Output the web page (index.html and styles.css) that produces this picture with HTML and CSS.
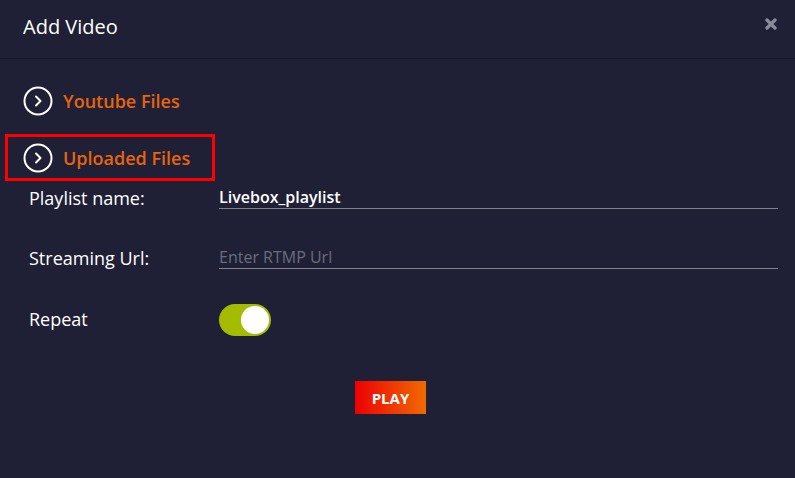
FILE: index.html
```html
<!DOCTYPE html>
<html>
<head>
<meta charset="utf-8">
<link rel="stylesheet" href="styles.css">
</head>
<body>
<div class="modal">
  <div class="header">
    <h1 class="title">Add Video</h1>
    <span class="close"><svg width="12" height="12" viewBox="0 0 12 12"><path d="M2 2 L10 10 M10 2 L2 10" stroke="#8a8b98" stroke-width="3.4" stroke-linecap="round"/></svg></span>
  </div>
  <div class="body">
    <div class="section">
      <span class="chev"><svg width="30" height="30" viewBox="0 0 30 30"><circle cx="15" cy="15" r="13.5" fill="none" stroke="#fff" stroke-width="2"/><path d="M13 10.5 L17.5 15 L13 19.5" fill="none" stroke="#fff" stroke-width="2" stroke-linecap="round" stroke-linejoin="round"/></svg></span>
      <span class="section-title">Youtube Files</span>
    </div>
    <div class="section highlighted">
      <span class="chev"><svg width="30" height="30" viewBox="0 0 30 30"><circle cx="15" cy="15" r="13.5" fill="none" stroke="#fff" stroke-width="2"/><path d="M13 10.5 L17.5 15 L13 19.5" fill="none" stroke="#fff" stroke-width="2" stroke-linecap="round" stroke-linejoin="round"/></svg></span>
      <span class="section-title">Uploaded Files</span>
    </div>
    <div class="form">
      <div class="row row-first">
        <label class="label">Playlist name:</label>
        <div class="input filled">Livebox_playlist</div>
      </div>
      <div class="row">
        <label class="label">Streaming Url:</label>
        <div class="input placeholder">Enter RTMP Url</div>
      </div>
      <div class="row row-toggle">
        <label class="label">Repeat</label>
        <div class="toggle"><span class="knob"></span></div>
      </div>
    </div>
    <div class="actions">
      <button class="play">PLAY</button>
    </div>
  </div>
</div>
</body>
</html>
```
FILE: styles.css
```css
* { box-sizing: border-box; }
html, body { margin: 0; padding: 0; background: #1f1f35; }
body { width: 795px; height: 478px; overflow: hidden; font-family: "Open Sans", "Noto Sans", sans-serif; color: #fff; }
.modal { height: 478px; }
.header { height: 59px; border-bottom: 1px solid #181829; display: flex; align-items: center; justify-content: space-between; padding: 0 18px 6px 23px; }
.title { margin: 0; font-weight: 400; font-size: 20px; }
.close { display: flex; margin-top: -4px; }
.body { padding: 27px 17px 0 5px; }
.section { display: flex; align-items: center; gap: 10px; height: 30px; padding-left: 18px; margin-bottom: 18px; }
.section.highlighted { width: 210px; height: 47px; border: 3px solid #ff0000; padding-left: 15px; margin-bottom: 0; }
.chev { display: flex; width: 30px; height: 30px; }
.section-title { color: #e8640e; font-weight: 600; font-size: 18px; }
.form { padding-left: 24px; }
.row { display: flex; align-items: flex-end; height: 60px; }
.row.row-first { height: 28px; }
.row.row-toggle { height: 32px; margin-top: 35px; align-items: center; }
.label { width: 190px; font-size: 18px; line-height: 22px; }
.row-toggle .label { margin-top: -2px; }
.input { flex: 1; border-bottom: 1px solid #7d8190; font-size: 16px; line-height: 22px; height: 23px; }
.input.filled { font-weight: 600; }
.input.placeholder { color: #696d7f; }
.toggle { width: 52px; height: 32px; background: #a4bc00; border-radius: 16px; display: flex; justify-content: flex-end; align-items: center; padding: 2px; }
.knob { width: 28px; height: 28px; background: #fff; border-radius: 50%; }
.actions { display: flex; justify-content: center; padding-right: 2px; margin-top: 45px; }
.play { width: 71px; height: 33px; border: none; background: linear-gradient(90deg, #ee0000, #f06a00); color: #fff; font-family: "Open Sans", sans-serif; font-weight: 700; font-size: 15px; padding: 0; }
```
